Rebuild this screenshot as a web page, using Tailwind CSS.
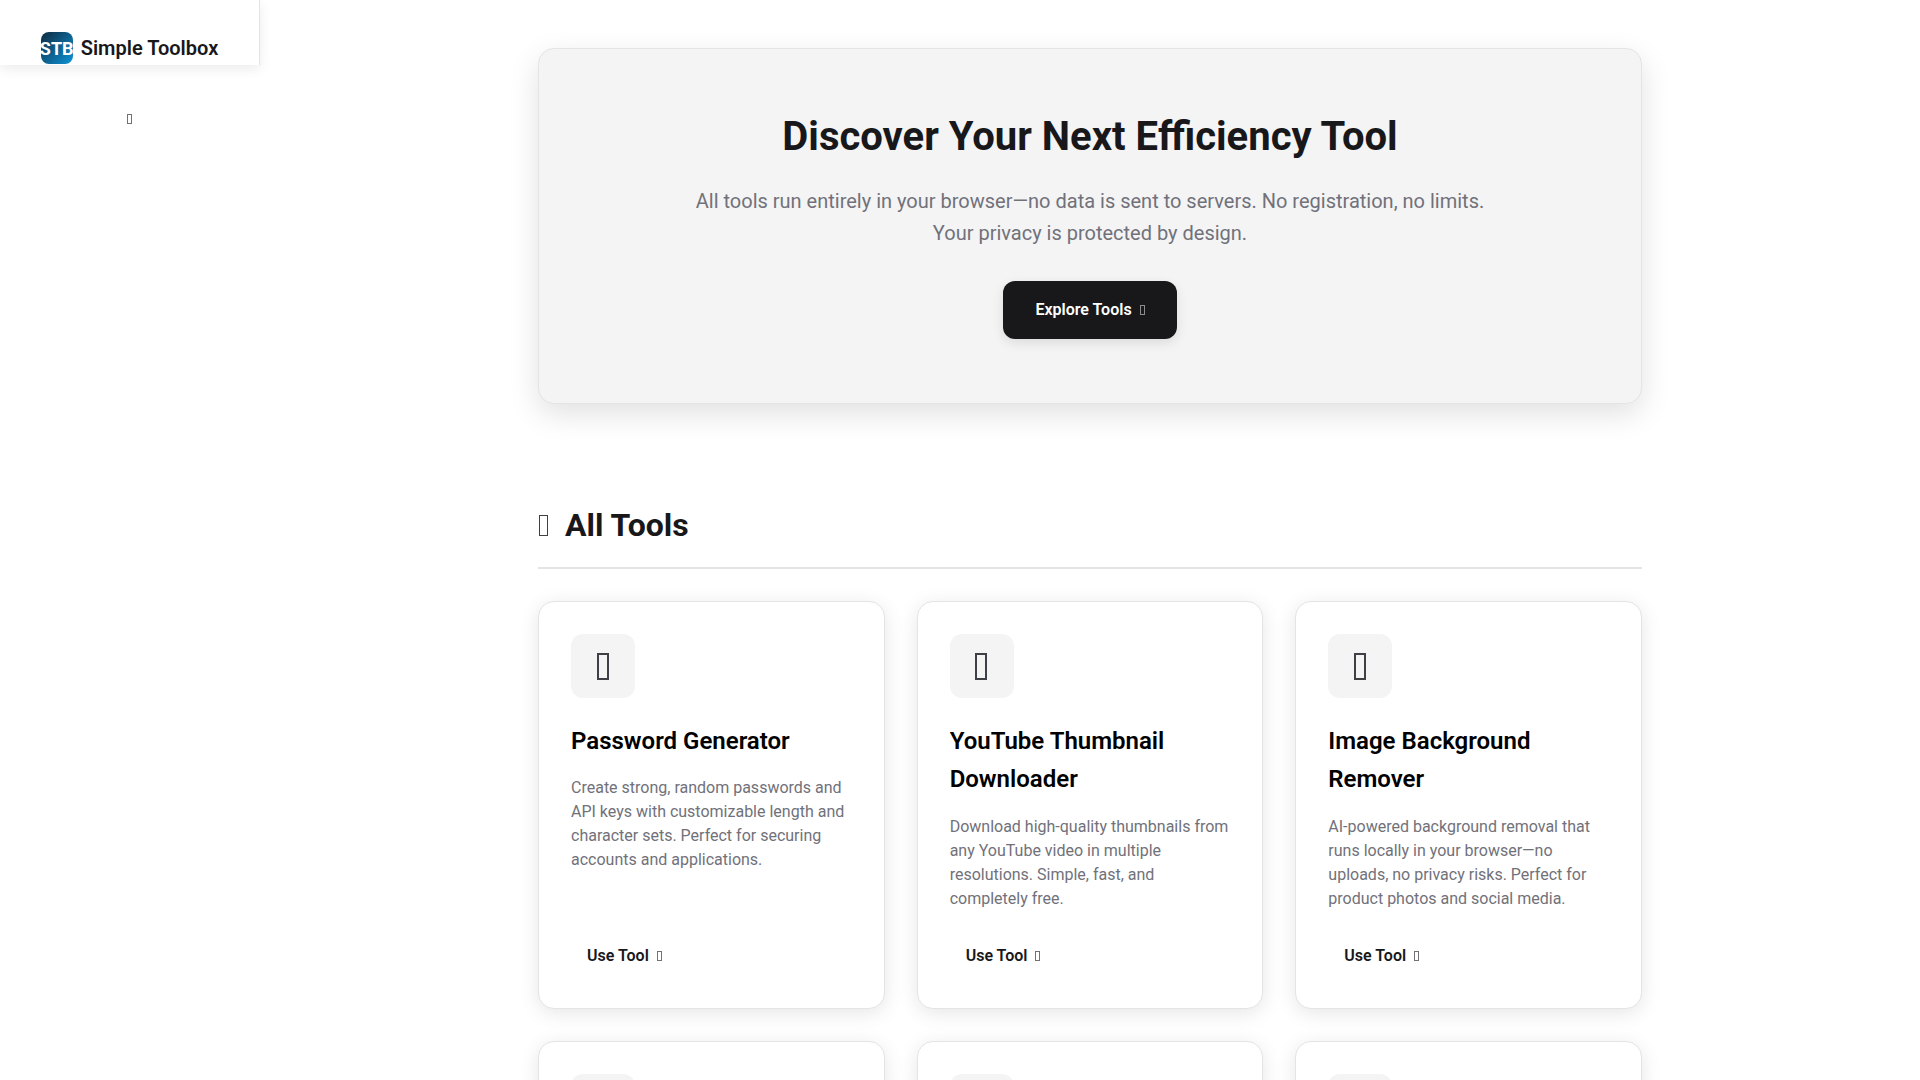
<!DOCTYPE html>
<html lang="en">
<head>
  <meta charset="UTF-8" />
  <title>Simple Toolbox</title>
  <script src="https://cdn.jsdelivr.net/npm/@tailwindcss/browser@4"></script>
</head>
<body class="bg-white text-[#18181b] font-['Roboto',sans-serif] h-screen overflow-hidden flex">
  <!-- sidebar -->
  <aside class="w-[260px] shrink-0">
    <div class="h-[65px] flex items-end justify-center gap-2 border-r border-[#e4e4e7] shadow-[0_4px_12px_rgba(0,0,0,0.08)]">
      <div class="w-8 h-8 mb-px rounded-lg bg-[linear-gradient(135deg,#0f2a3f,#0c94d8)] text-white text-[18px] font-bold flex items-center justify-center overflow-hidden">STB</div>
      <span class="text-[20px] leading-8 mb-px font-semibold whitespace-nowrap">Simple Toolbox</span>
    </div>
    <div class="mt-[49px] ml-[127px] w-[5px] h-[10px] border border-[#71717a]"></div>
  </aside>

  <main class="flex-1 min-w-0">
    <div class="w-[1104px] mx-auto pt-12">
      <!-- hero -->
      <section class="h-[356px] pt-[64px] rounded-2xl bg-[#f4f4f5] border border-[#e4e4e7] shadow-[0_10px_30px_rgba(0,0,0,0.12)] text-center">
        <h1 class="text-[40px] leading-[48px] font-bold">Discover Your Next Efficiency Tool</h1>
        <p class="mt-[24px] text-[20px] leading-[32px] text-[#71717a]">All tools run entirely in your browser—no data is sent to servers. No registration, no limits.<br>Your privacy is protected by design.</p>
        <button class="mt-[32px] h-[58px] px-8 rounded-xl bg-[#18181b] text-white text-[16px] font-semibold inline-flex items-center gap-2 shadow-[0_4px_12px_rgba(0,0,0,0.1)]">Explore Tools <span class="w-[5px] h-[10px] border border-white/50"></span></button>
      </section>

      <!-- all tools -->
      <div class="mt-[101px] pb-[22px] border-b-2 border-[#e4e4e7] flex items-center gap-[17px]">
        <span class="ml-px w-[9px] h-[21px] border border-[#3f3f46]"></span>
        <h2 class="text-[32px] leading-[40px] font-bold">All Tools</h2>
      </div>

      <div class="mt-[32px] grid grid-cols-3 gap-[32px]">
        <article class="h-[408px] p-[32px] rounded-2xl border border-[#e4e4e7] bg-white shadow-[0_4px_20px_rgba(0,0,0,0.1)] flex flex-col">
          <div class="w-16 h-16 rounded-xl bg-[#f4f4f5] flex items-center justify-center"><span class="mr-px w-3 h-[27px] border-2 border-[#3f3f46]"></span></div>
          <h3 class="mt-[24px] text-[24px] leading-[38.4px] font-semibold text-black">Password Generator</h3>
          <p class="mt-[16px] text-[16px] leading-[24px] text-[#71717a]">Create strong, random passwords and API keys with customizable length and character sets. Perfect for securing accounts and applications.</p>
          <a class="mt-auto px-4 py-2 text-[16px] leading-6 font-semibold flex items-center gap-2">Use Tool <span class="w-[5px] h-[10px] border border-[#71717a]"></span></a>
        </article>
        <article class="h-[408px] p-[32px] rounded-2xl border border-[#e4e4e7] bg-white shadow-[0_4px_20px_rgba(0,0,0,0.1)] flex flex-col">
          <div class="w-16 h-16 rounded-xl bg-[#f4f4f5] flex items-center justify-center"><span class="mr-px w-3 h-[27px] border-2 border-[#3f3f46]"></span></div>
          <h3 class="mt-[24px] text-[24px] leading-[38.4px] font-semibold text-black">YouTube Thumbnail Downloader</h3>
          <p class="mt-[16px] text-[16px] leading-[24px] text-[#71717a]">Download high-quality thumbnails from any YouTube video in multiple resolutions. Simple, fast, and completely free.</p>
          <a class="mt-auto px-4 py-2 text-[16px] leading-6 font-semibold flex items-center gap-2">Use Tool <span class="w-[5px] h-[10px] border border-[#71717a]"></span></a>
        </article>
        <article class="h-[408px] p-[32px] rounded-2xl border border-[#e4e4e7] bg-white shadow-[0_4px_20px_rgba(0,0,0,0.1)] flex flex-col">
          <div class="w-16 h-16 rounded-xl bg-[#f4f4f5] flex items-center justify-center"><span class="mr-px w-3 h-[27px] border-2 border-[#3f3f46]"></span></div>
          <h3 class="mt-[24px] text-[24px] leading-[38.4px] font-semibold text-black">Image Background Remover</h3>
          <p class="mt-[16px] text-[16px] leading-[24px] text-[#71717a]">AI-powered background removal that runs locally in your browser—no uploads, no privacy risks. Perfect for product photos and social media.</p>
          <a class="mt-auto px-4 py-2 text-[16px] leading-6 font-semibold flex items-center gap-2">Use Tool <span class="w-[5px] h-[10px] border border-[#71717a]"></span></a>
        </article>
        <article class="h-[408px] p-[32px] rounded-2xl border border-[#e4e4e7] bg-white shadow-[0_4px_20px_rgba(0,0,0,0.1)]">
          <div class="w-16 h-16 rounded-xl bg-[#f4f4f5]"></div>
        </article>
        <article class="h-[408px] p-[32px] rounded-2xl border border-[#e4e4e7] bg-white shadow-[0_4px_20px_rgba(0,0,0,0.1)]">
          <div class="w-16 h-16 rounded-xl bg-[#f4f4f5]"></div>
        </article>
        <article class="h-[408px] p-[32px] rounded-2xl border border-[#e4e4e7] bg-white shadow-[0_4px_20px_rgba(0,0,0,0.1)]">
          <div class="w-16 h-16 rounded-xl bg-[#f4f4f5]"></div>
        </article>
      </div>
    </div>
  </main>
</body>
</html>
